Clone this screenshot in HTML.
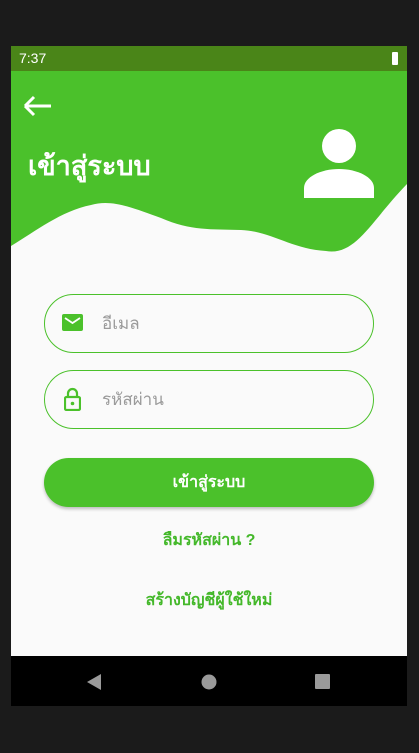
<!DOCTYPE html>
<html><head><meta charset="utf-8"><style>
*{margin:0;padding:0;box-sizing:border-box}
body{width:419px;height:753px;background:#1b1b1b;position:relative;overflow:hidden;font-family:"Liberation Sans","Noto Sans CJK SC",sans-serif}
.scr{position:absolute;left:11px;top:46px;width:396px;height:660px;background:#fafafa;overflow:hidden}
.sb{position:absolute;left:0;top:0;width:396px;height:25px;background:#4a8518;color:#fff;font-size:14px;line-height:25px;padding-left:8px}
.bat{position:absolute;right:9px;top:6px;width:6px;height:13px;background:#fff;border-radius:1px}
.field{position:absolute;left:33px;width:330px;height:59px;border:1.3px solid #4bc12b;border-radius:30px;color:#9a9a9a;font-size:17px;line-height:57px;padding-left:57px}
.btn{position:absolute;left:33px;top:412px;width:330px;height:49px;border-radius:25px;background:#4bc12b;color:#fff;text-align:center;line-height:49px;font-size:16px;font-weight:bold;box-shadow:0 2px 3px rgba(0,0,0,.25)}
.lnk{position:absolute;left:0;width:396px;text-align:center;color:#44b82a;font-size:16px;font-weight:bold}
.nav{position:absolute;left:0;top:610px;width:396px;height:50px;background:#000}
</style></head><body>
<div class="scr">
<svg style="position:absolute;left:0;top:25px" width="396" height="200" viewBox="0 0 396 200">
<path d="M0 0H396V113C360 150 345 185 315 180C280 178 260 160 230 159C200 158 180 160 150 147C120 136 100 128 80 134C50 140 25 160 0 175Z" fill="#4bc12b"/>
<path d="M14 35H40M14 35L23 26M14 35L23 44" stroke="#fff" stroke-width="3" fill="none"/>
<circle cx="328" cy="75" r="17" fill="#fff"/>
<path d="M293 127V117C293 106 310 98 328 98C346 98 363 106 363 117V127Z" fill="#fff"/>
</svg>
<div class="sb">7:37<div class="bat"></div></div>
<div style="position:absolute;left:17px;top:98px;color:#fff;font-size:27px;font-weight:bold">เข้าสู่ระบบ</div>
<div class="field" style="top:248px">อีเมล
<svg style="position:absolute;left:17px;top:19px" width="21" height="17"><rect width="21" height="17" rx="2" fill="#4bc12b"/><path d="M3 4L10.5 9L18 4" stroke="#fff" stroke-width="1.8" fill="none"/></svg></div>
<div class="field" style="top:324px">รหัสผ่าน
<svg style="position:absolute;left:19px;top:16px" width="17" height="24"><path d="M4 10V6.5A4.5 4.5 0 0 1 13 6.5V10" stroke="#4bc12b" stroke-width="2.2" fill="none"/><rect x="1" y="10" width="15" height="13" rx="1.5" stroke="#4bc12b" stroke-width="2.2" fill="none"/><circle cx="8.5" cy="16.5" r="1.8" fill="#4bc12b"/></svg></div>
<div class="btn">เข้าสู่ระบบ</div>
<div class="lnk" style="top:482px">ลืมรหัสผ่าน ?</div>
<div class="lnk" style="top:542px">สร้างบัญชีผู้ใช้ใหม่</div>
<div class="nav">
<svg width="396" height="50"><path d="M90 18L76 26L90 34Z" fill="#9a9a9a"/><circle cx="198" cy="26" r="7.5" fill="#9a9a9a"/><rect x="304" y="18" width="15" height="15" rx="1" fill="#9a9a9a"/></svg>
</div>
</div>
</body></html>
